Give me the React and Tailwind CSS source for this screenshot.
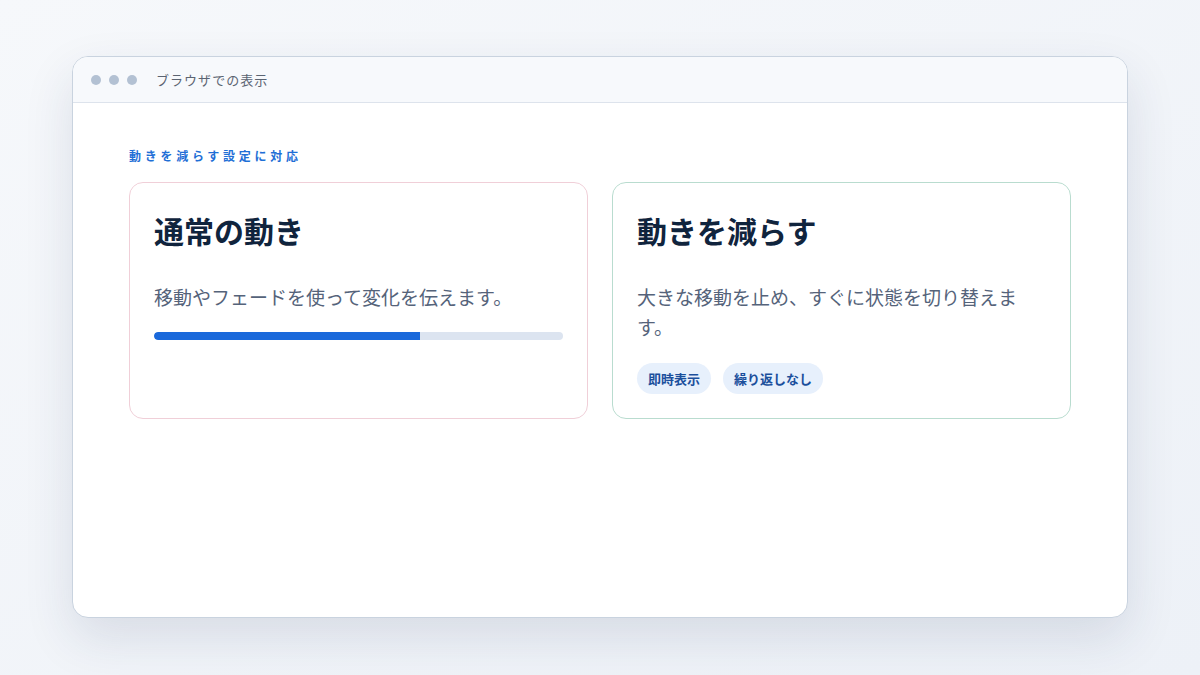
const tags = ["即時表示", "繰り返しなし"];

const App = () => {
  const progress = 65;

  return (
    <div
      className="w-[1200px] h-[675px] bg-gradient-to-br from-[#f6f8fb] to-[#edf1f7] px-[72px] pt-[56px] pb-[57px]"
      style={{ fontFamily: '"Noto Sans CJK JP", "Noto Sans", sans-serif' }}
    >
      <div className="h-full bg-white rounded-[16px] border border-[#c9d3df] shadow-[0_20px_50px_rgba(30,50,90,0.12)] overflow-hidden flex flex-col">
        <div className="h-[46px] shrink-0 bg-[#f7f9fc] border-b border-[#dde3ec] flex items-center px-[18px]">
          <div className="flex gap-[8px]">
            <span className="w-[10px] h-[10px] rounded-full bg-[#b3c1d3]"></span>
            <span className="w-[10px] h-[10px] rounded-full bg-[#b3c1d3]"></span>
            <span className="w-[10px] h-[10px] rounded-full bg-[#b3c1d3]"></span>
          </div>
          <span className="ml-[19px] text-[13px] tracking-[0.08em] text-[#5b6472]">
            ブラウザでの表示
          </span>
        </div>

        <div className="flex-1 px-[56px] pt-[44px]">
          <p className="text-[12px] leading-[18px] font-bold tracking-[0.31em] text-[#1f6fd6]">
            動きを減らす設定に対応
          </p>

          <div className="mt-[17px] grid grid-cols-2 gap-[24px]">
            <div className="h-[237px] rounded-[14px] border border-[#f0cfd8] px-[24px] pt-[24px]">
              <h2 className="mt-1 text-[30px] leading-[1.3] font-bold text-[#10243d]">
                通常の動き
              </h2>
              <p className="mt-[32px] text-[19px] leading-[30px] text-[#55637a]">
                移動やフェードを使って変化を伝えます。
              </p>
              <div className="mt-[20px] h-[8px] rounded-full bg-[#dce4f0] overflow-hidden">
                <div
                  className="h-full rounded-l-full bg-[#1a69db]"
                  style={{ width: `${progress}%` }}
                ></div>
              </div>
            </div>

            <div className="h-[237px] rounded-[14px] border border-[#b9dccf] px-[24px] pt-[24px]">
              <h2 className="mt-1 text-[30px] leading-[1.3] font-bold text-[#10243d]">
                動きを減らす
              </h2>
              <p className="mt-[32px] text-[19px] leading-[30px] text-[#55637a]">
                大きな移動を止め、すぐに状態を切り替えます。
              </p>
              <div className="mt-[21px] flex gap-[12px]">
                {tags.map((t) => (
                  <span
                    key={t}
                    className="h-[31px] px-[11px] flex items-center rounded-full bg-[#e7f0fc] text-[13px] font-bold text-[#1b4f9c]"
                  >
                    {t}
                  </span>
                ))}
              </div>
            </div>
          </div>
        </div>
      </div>
    </div>
  );
};

export default App;
